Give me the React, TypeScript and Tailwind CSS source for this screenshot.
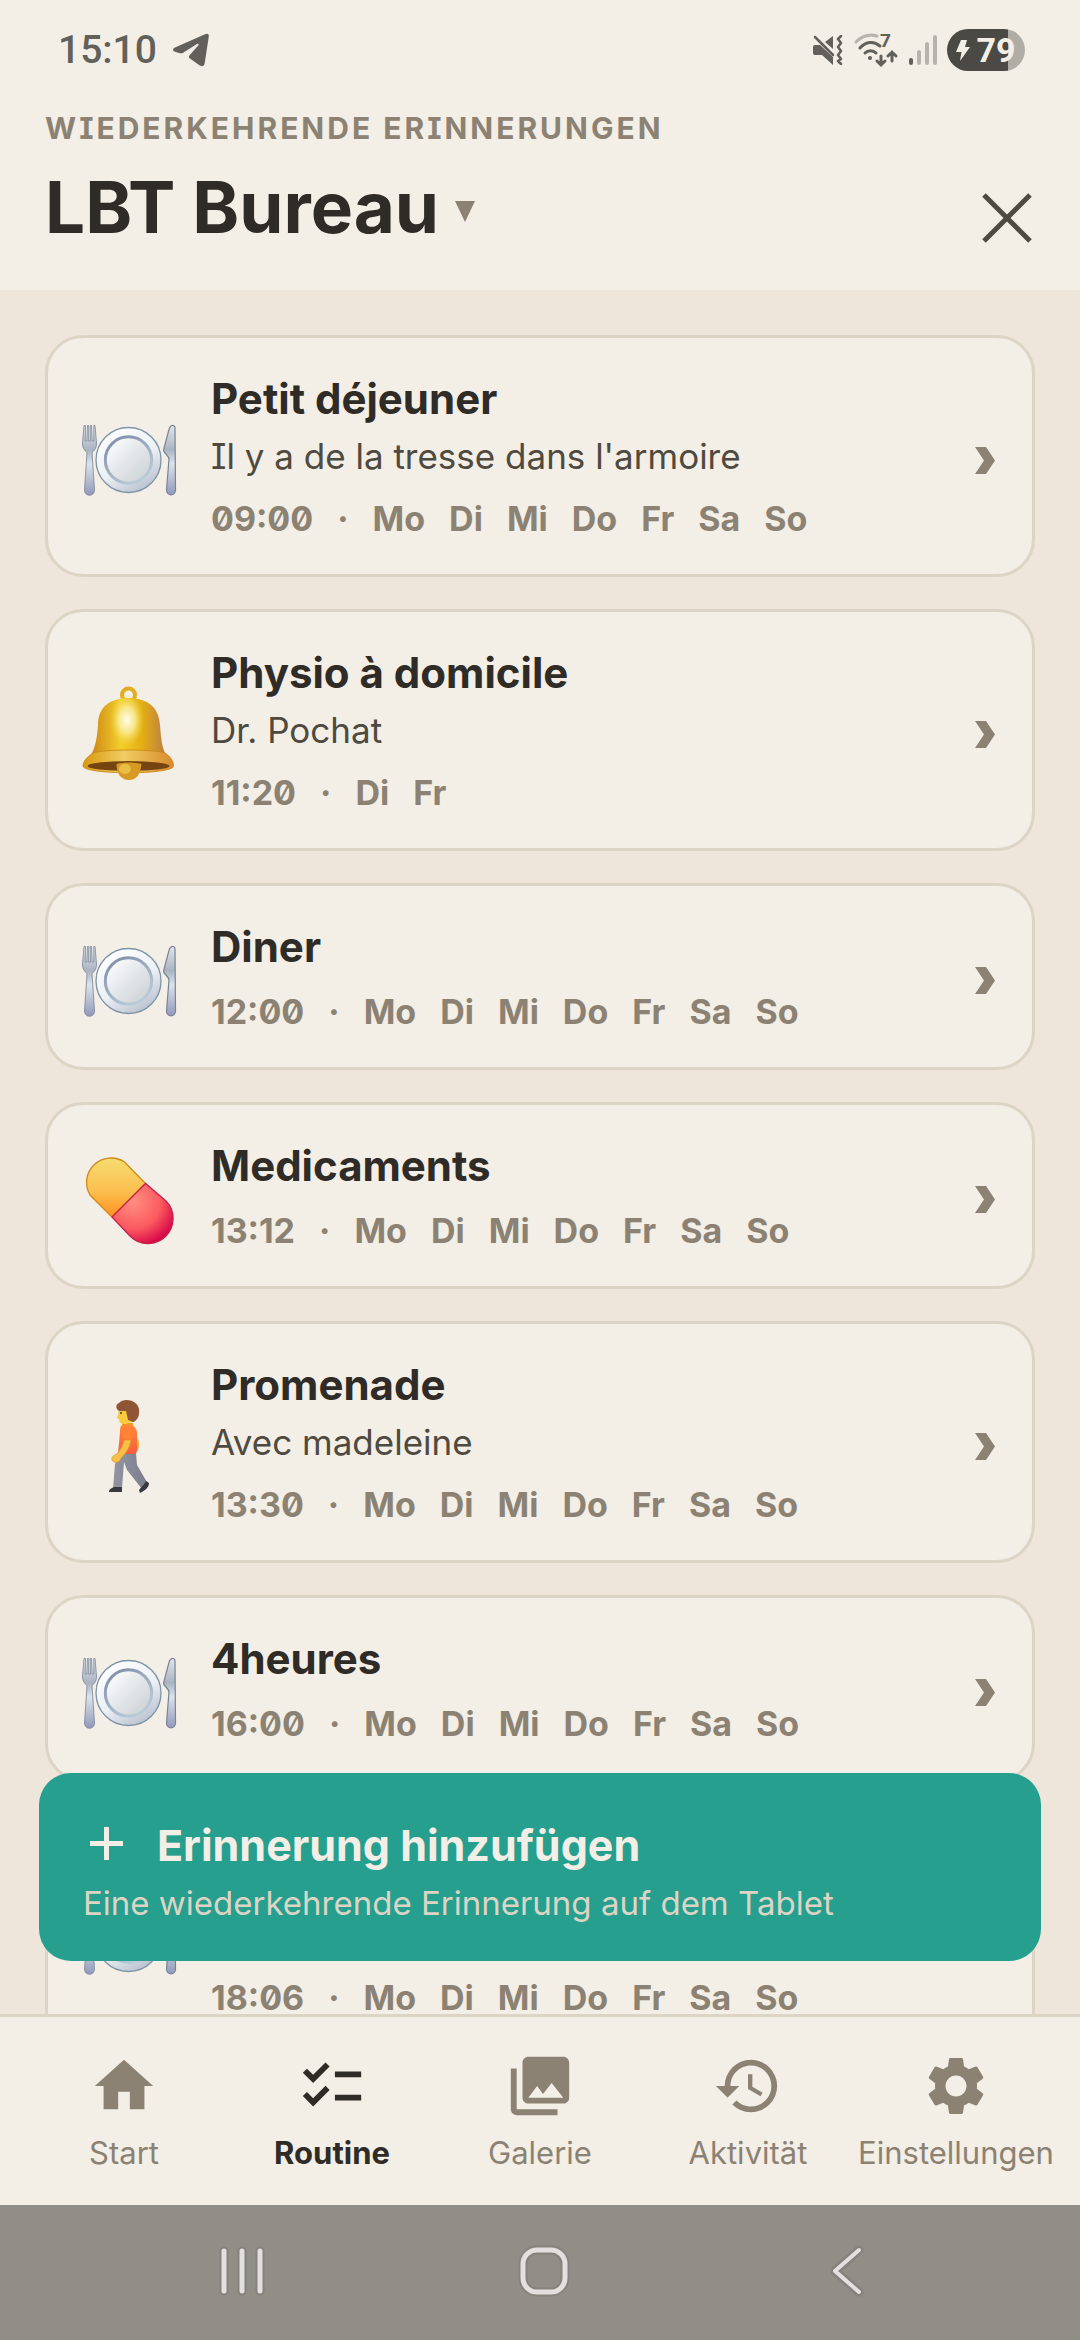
import React, { useState } from 'react';
import { MdHome, MdChecklist, MdCollections, MdHistory, MdSettings } from 'react-icons/md';
import { clsx } from 'clsx';

interface Reminder {
  id: string;
  title: string;
  note?: string;
  time: string;
  days: string[];
  icon: () => React.ReactElement;
}

function PlateIcon() {
  return (
    <svg viewBox="0 0 96 96" className="mt-2 size-24 shrink-0" aria-hidden="true">
      <defs>
        <linearGradient id="rim" x1="0.2" y1="0" x2="0.8" y2="1">
          <stop offset="0" stopColor="#ffffff" />
          <stop offset="0.55" stopColor="#eaf0f4" />
          <stop offset="1" stopColor="#b4bccb" />
        </linearGradient>
        <linearGradient id="well" x1="0.1" y1="0.1" x2="0.9" y2="0.9">
          <stop offset="0" stopColor="#fafbfc" />
          <stop offset="1" stopColor="#ccd2d6" />
        </linearGradient>
        <linearGradient id="ring" x1="0.2" y1="0" x2="0.8" y2="1">
          <stop offset="0" stopColor="#8190ab" />
          <stop offset="1" stopColor="#bfd0db" />
        </linearGradient>
        <linearGradient id="steel" x1="0" y1="0" x2="0" y2="1">
          <stop offset="0" stopColor="#e3e5e8" />
          <stop offset="0.35" stopColor="#a9b4c2" />
          <stop offset="0.55" stopColor="#dbe3ea" />
          <stop offset="1" stopColor="#9299ba" />
        </linearGradient>
      </defs>
      <circle cx="47.5" cy="48" r="32.5" fill="url(#rim)" stroke="#7d93a6" strokeWidth="1.3" />
      <circle cx="47.5" cy="48" r="23.2" fill="url(#well)" stroke="url(#ring)" strokeWidth="3" />
      <path
        d="M3 13.5 1.500 31c0 5 1.500 7 4.500 9.500L3.500 78c0 7 10 7 10 0L11 40.500c3-2.500 4.500-4.500 4.500-9.500L14 13.500h-1.200V29h-1.600L10.500 13.500H9.300V29H7.700V13.500H6.500L5.800 29H4.200L4.500 13.500z"
        fill="url(#steel)"
        stroke="#75849a"
        strokeWidth="0.8"
      />
      <path
        d="M94 15.500c-1-3.500-5-2.500-6 2L82.500 38c-.3 3 5.500 5.500 5.500 9l-2.500 31c0 6.500 9 6.500 9 0z"
        fill="url(#steel)"
        stroke="#75849a"
        strokeWidth="1.2"
      />
    </svg>
  );
}

function BellIcon() {
  return (
    <svg viewBox="0 0 96 96" className="mt-2 size-24 shrink-0" aria-hidden="true">
      <defs>
        <linearGradient id="bellBody" x1="0" y1="0" x2="1" y2="0">
          <stop offset="0" stopColor="#b8701f" />
          <stop offset="0.18" stopColor="#d89a1c" />
          <stop offset="0.42" stopColor="#f2cf2a" />
          <stop offset="0.66" stopColor="#e3ae12" />
          <stop offset="0.85" stopColor="#c68a3a" />
          <stop offset="1" stopColor="#b8641c" />
        </linearGradient>
        <radialGradient id="bellShine">
          <stop offset="0" stopColor="#fffdf0" />
          <stop offset="0.5" stopColor="#fbeea0" stopOpacity="0.8" />
          <stop offset="1" stopColor="#f5d94a" stopOpacity="0" />
        </radialGradient>
        <linearGradient id="bellRim" x1="0" y1="0" x2="1" y2="0">
          <stop offset="0" stopColor="#d99a10" />
          <stop offset="0.45" stopColor="#f0cd62" />
          <stop offset="1" stopColor="#d98a2c" />
        </linearGradient>
      </defs>
      <circle cx="47.5" cy="9" r="6.5" fill="none" stroke="#e3ab20" strokeWidth="4" />
      <path
        d="M17 39C17 21 29 12 47.500 12S78 21 79 39c1 14 2 23 6 30l7 10c0 5-20 8-44.500 8S2 83 2 79l8-10c4-7 6-16 7-30z"
        fill="url(#bellBody)"
      />
      <ellipse cx="46" cy="34" rx="17" ry="26" fill="url(#bellShine)" />
      <path
        d="M12 67c10-4 62-4 72 0 5 3 8.500 8 8.500 13 0 9-90.500 9-90.500 0 0-5 5-10 10-13z"
        fill="url(#bellRim)"
        stroke="#c98418"
        strokeWidth="0.8"
      />
      <ellipse cx="47.5" cy="80" rx="41" ry="5" fill="#754410" />
      <path d="M35.500 78c7-2 17-2 25 0-1 9-4 16-12.500 16s-12.500-7-12.500-16z" fill="#d99a24" />
      <ellipse cx="44" cy="83" rx="6" ry="5" fill="#f0cd55" opacity="0.7" />
    </svg>
  );
}

function PillIcon() {
  return (
    <svg viewBox="2 -2 96 96" className="mt-2 size-24 shrink-0" aria-hidden="true">
      <defs>
        <linearGradient id="pillTop" x1="0" y1="1" x2="0" y2="0">
          <stop offset="0" stopColor="#ff9020" />
          <stop offset="0.45" stopColor="#fcc050" />
          <stop offset="1" stopColor="#f6dc70" />
        </linearGradient>
        <radialGradient id="pillBottom" cx="0.35" cy="0.3" r="0.75">
          <stop offset="0" stopColor="#ff8f80" />
          <stop offset="0.6" stopColor="#fb5a60" />
          <stop offset="1" stopColor="#d80a48" />
        </radialGradient>
      </defs>
      <path
        d="M66.500 29.500 33 63 11 41A24.500 24.500 0 0 1 45.500 8z"
        fill="url(#pillTop)"
        stroke="#cf8a18"
        strokeWidth="1.3"
      />
      <path
        d="M66.500 29.500 33 63 51 82A25 25 0 0 0 87 47z"
        fill="url(#pillBottom)"
        stroke="#c4204a"
        strokeWidth="1.3"
      />
    </svg>
  );
}

function WalkIcon() {
  return (
    <svg viewBox="0 0 96 96" className="mt-2 size-24 shrink-0" aria-hidden="true">
      <defs>
        <linearGradient id="shirt" x1="0" y1="0" x2="0" y2="1">
          <stop offset="0" stopColor="#ff8b38" />
          <stop offset="1" stopColor="#fb5a3e" />
        </linearGradient>
        <linearGradient id="trousers" x1="0" y1="0" x2="1" y2="0">
          <stop offset="0" stopColor="#9294a2" />
          <stop offset="1" stopColor="#7b7e8d" />
        </linearGradient>
      </defs>
      <path d="m41 55 14 0 1 12 11 19-6 5-15-19-3-8-2 26h-9l2-24z" fill="url(#trousers)" />
      <path d="m33 89 8 0v5H28c0-3 3-4 5-5z" fill="#363a40" />
      <path d="M58 92c2-3 5-5 7-9l3 2c0 5-5 8-9 10z" fill="#363a40" />
      <path d="M41 25h11v7H41z" fill="#e8a018" />
      <path d="M55 38c4 4 4 13 0 17l-3-3z" fill="#f0b428" />
      <path d="M41 27c8-3 14 1 15 7v18c0 3-2 4-5 4H37l2-22c0-3 0-6 2-7z" fill="url(#shirt)" />
      <path d="M43 42h7c-1 8-6 14-10 18-1 5-7 6-9 2-1-3 2-5 5-6 3-4 6-8 7-14z" fill="#f5c045" stroke="#d99a28" strokeWidth="0.7" />
      <path d="M42 30c6-3 10 0 10 5l-1 7-8-1c-2-3-3-8-1-11z" fill="#ff8236" />
      <path d="M38 10c-1 5 0 6-2 9 0 1 1 2 2 2 0 4 2 5 7 5l8-3V8z" fill="#fbcb3e" />
      <path d="M38 13c-4-3-3-7 0-8 4-5 18-4 20 6 1 7-2 12-6 13l-5-2-2-9z" fill="#8f5534" />
      <circle cx="40" cy="15" r="1" fill="#4b3428" />
    </svg>
  );
}

const WEEK = ['Mo', 'Di', 'Mi', 'Do', 'Fr', 'Sa', 'So'];

const reminders: Reminder[] = [
  { id: 'r1', title: 'Petit déjeuner', note: "Il y a de la tresse dans l'armoire", time: '09:00', days: WEEK, icon: PlateIcon },
  { id: 'r2', title: 'Physio à domicile', note: 'Dr. Pochat', time: '11:20', days: ['Di', 'Fr'], icon: BellIcon },
  { id: 'r3', title: 'Diner', time: '12:00', days: WEEK, icon: PlateIcon },
  { id: 'r4', title: 'Medicaments', time: '13:12', days: WEEK, icon: PillIcon },
  { id: 'r5', title: 'Promenade', note: 'Avec madeleine', time: '13:30', days: WEEK, icon: WalkIcon },
  { id: 'r6', title: '4heures', time: '16:00', days: WEEK, icon: PlateIcon },
  { id: 'r7', title: '', note: '', time: '18:06', days: WEEK, icon: PlateIcon },
];

const tabs = [
  { id: 'start', label: 'Start', icon: MdHome },
  { id: 'routine', label: 'Routine', icon: MdChecklist },
  { id: 'galerie', label: 'Galerie', icon: MdCollections },
  { id: 'aktivitaet', label: 'Aktivität', icon: MdHistory },
  { id: 'einstellungen', label: 'Einstellungen', icon: MdSettings },
];

function StatusBar() {
  return (
    <div className="flex h-[100px] items-center justify-between pl-[58px] pr-[55px] text-[#61605a]">
      <div className="flex items-center gap-4">
        <span className="font-[Roboto,sans-serif] text-[39px] leading-none font-medium">15:10</span>
        <svg viewBox="0 0 36 34" className="h-[34px] w-9" fill="currentColor" aria-hidden="true">
          <path d="M2 14.500 32 1.300C35 0 36 1 35.700 4l-3.900 25.500c-.6 4-2.800 4.500-5.800 2.500l-9-6.500c-1.500-1.200-1.500-2.200-.2-3.600l8.400-9.400c1-1.400.3-2.300-1.300-1.400L10.500 19.500c-1.500 1-2.800 1-4.500.500L1.500 18.500c-2-.8-2-2.800.5-4z" />
        </svg>
      </div>
      <div className="flex items-center gap-2.5">
        <svg viewBox="0 0 30 30" className="size-[30px]" fill="none" stroke="currentColor" aria-hidden="true">
          <path d="M0 12q0-2 2-2h5l13 12v8L9 20H2q-2 0-2-2zM12 7l8-6v13z" fill="currentColor" stroke="none" />
          <path d="m2 2 18 18" strokeWidth="2.5" strokeLinecap="round" />
          <path d="m28 1-3 3 3 4-3 4 3 4-3 4 3 4-3 2 3 3" strokeWidth="2.5" strokeLinecap="round" strokeLinejoin="round" />
        </svg>
        <svg viewBox="0 0 46 34" className="h-[34px] w-[46px] overflow-visible" fill="none" stroke="currentColor" strokeLinecap="round" aria-hidden="true">
          <path d="M3 9C9 3 17 1 24 3" strokeWidth="3" opacity="0.4" />
          <path d="M7 15c6-7 14-7 20-2" strokeWidth="3" />
          <path d="M12 20c3-3 8-3 11 0" strokeWidth="3" />
          <circle cx="17" cy="25" r="2" fill="currentColor" stroke="none" />
          <path d="M28 23v9m-4-4 4 4 4-4M39 28v-9m-4 4 4-4 4 4" strokeWidth="3" />
          <text x="27" y="14" fontSize="19" fontWeight="700" fontFamily="Roboto" fill="currentColor" stroke="none">7</text>
        </svg>
        <svg viewBox="0 0 28 30" className="h-[30px] w-7" stroke="currentColor" strokeWidth="4" strokeLinecap="round" aria-hidden="true">
          <path d="M2 25v3" />
          <path d="M10 17v11M18 9v19M26 2v26" opacity="0.4" />
        </svg>
        <div className="flex h-[42px] w-[78px] items-center justify-center gap-1.5 rounded-full bg-linear-to-r from-[#4a4943] from-78% to-[#b0ada6] to-78% text-[#f3eee6]">
          <svg viewBox="0 0 14 22" className="h-[22px] w-3.5" fill="currentColor" aria-hidden="true">
            <path d="M5 1h6L9 8h5L4 22l1.500-9H0z" />
          </svg>
          <span className="font-[Roboto,sans-serif] text-[34px] leading-none font-bold">79</span>
        </div>
      </div>
    </div>
  );
}

function ReminderCard({ reminder }: { reminder: Reminder }) {
  const Icon = reminder.icon;
  return (
    <li>
      <button className="flex w-full items-center gap-[34px] rounded-[38px] border-3 border-[#dcd4c4] bg-[#f3eee6] px-[33px] py-[33px] text-left">
        <Icon />
        <span className="min-w-0 flex-1">
          <span className="block min-h-14 text-[42px] leading-14 font-bold text-[#2f2b26]">{reminder.title}</span>
          {reminder.note !== undefined && (
            <span className="mt-1 block min-h-[51px] text-[35px] leading-[51px] text-[#4f4a3f]">{reminder.note}</span>
          )}
          <span className="mt-[15px] flex gap-6 text-[34px] leading-11 font-bold text-[#8b8273]">
            <span className="slashed-zero">{reminder.time}</span>
            <span>·</span>
            {reminder.days.map(day => (
              <span key={day}>{day}</span>
            ))}
          </span>
        </span>
        <svg viewBox="0 0 20 27" className="mt-2 mr-1 h-[27px] w-5 shrink-0" fill="#8b8273" aria-hidden="true">
          <path d="M0 0h11l9 13.500L11 27H0l9-13.500z" />
        </svg>
      </button>
    </li>
  );
}

export default function App() {
  const [activeTab, setActiveTab] = useState('routine');

  return (
    <div className="flex h-screen flex-col overflow-hidden bg-[#eee6da] font-[Inter,sans-serif] [font-feature-settings:'cv08']">
      <header className="bg-[#f3eee6]">
        <StatusBar />
        <div className="flex items-end justify-between pt-1.5 pr-12 pb-[43px] pl-[45px]">
          <div>
            <p className="text-[30px] leading-11 font-bold tracking-widest text-[#8b8273] uppercase">Wiederkehrende Erinnerungen</p>
            <button className="mt-[17px] flex items-center gap-4 text-[71px] leading-20 font-bold text-[#2f2b26]">
              <h1>LBT Bureau</h1>
              <svg viewBox="0 0 20 21" className="mt-2 h-[21px] w-5" fill="#8b8273" aria-hidden="true">
                <path d="M0 0h20L10 21z" />
              </svg>
            </button>
          </div>
          <button aria-label="Schliessen" className="mb-1">
            <svg viewBox="0 0 50 50" className="size-[50px]" stroke="#4f4a3f" strokeWidth="5" aria-hidden="true">
              <path d="m2 2 46 46M48 2 2 48" />
            </svg>
          </button>
        </div>
      </header>

      <main className="relative min-h-0 flex-1 overflow-hidden">
        <ul className="flex flex-col gap-8 px-[45px] pt-[45px]">
          {reminders.map(r => (
            <ReminderCard key={r.id} reminder={r} />
          ))}
        </ul>
        <button className="absolute inset-x-[39px] bottom-[53px] rounded-4xl bg-[#279f8e] px-11 pt-11 pb-9 text-left">
          <span className="flex items-center gap-[33px] text-[43px] leading-14 font-bold text-[#f3eee6]">
            <svg viewBox="0 0 41 41" className="size-[41px]" stroke="currentColor" strokeWidth="5" aria-hidden="true">
              <path d="M7 18.500h33M23.500 2v33" />
            </svg>
            Erinnerung hinzufügen
          </span>
          <span className="mt-2 block text-[33px] leading-11 text-[#dcd4c4]">Eine wiederkehrende Erinnerung auf dem Tablet</span>
        </button>
      </main>

      <nav className="grid grid-cols-5 border-t-3 border-[#dcd4c4] bg-[#f3eee6] px-5 pt-[34px] pb-[34px]">
        {tabs.map(tab => (
          <button
            key={tab.id}
            onClick={() => setActiveTab(tab.id)}
            className={clsx(
              'flex flex-col items-center gap-3.5 text-[31px] leading-9',
              activeTab === tab.id ? 'font-bold text-[#2f2b26]' : 'text-[#8b8273]'
            )}
          >
            <tab.icon className="size-[70px]" />
            {tab.label}
          </button>
        ))}
      </nav>

      <div className="grid h-[135px] grid-cols-3 place-items-center bg-[#918d87] pr-[83px] pb-1 pl-[91px] text-[#e2e1df]">
        <button aria-label="Letzte Apps">
          <svg viewBox="0 0 50 56" className="h-14 w-[50px]" fill="none" strokeLinecap="round" aria-hidden="true">
            <path d="M7 8v40M25 8v40M43 8v40" stroke="#86827c" strokeWidth="9" />
            <path d="M7 8v40M25 8v40M43 8v40" stroke="currentColor" strokeWidth="5" />
          </svg>
        </button>
        <button aria-label="Startbildschirm">
          <svg viewBox="0 0 56 56" className="size-14" fill="none" aria-hidden="true">
            <rect x="7" y="7" width="42" height="42" rx="14" stroke="#86827c" strokeWidth="9" />
            <rect x="7" y="7" width="42" height="42" rx="14" stroke="currentColor" strokeWidth="5" />
          </svg>
        </button>
        <button aria-label="Zurück">
          <svg viewBox="0 0 40 56" className="h-14 w-10" fill="none" strokeLinecap="round" strokeLinejoin="round" aria-hidden="true">
            <path d="M33 7 9 28l24 21" stroke="#86827c" strokeWidth="9" />
            <path d="M33 7 9 28l24 21" stroke="currentColor" strokeWidth="4" />
          </svg>
        </button>
      </div>
    </div>
  );
}
